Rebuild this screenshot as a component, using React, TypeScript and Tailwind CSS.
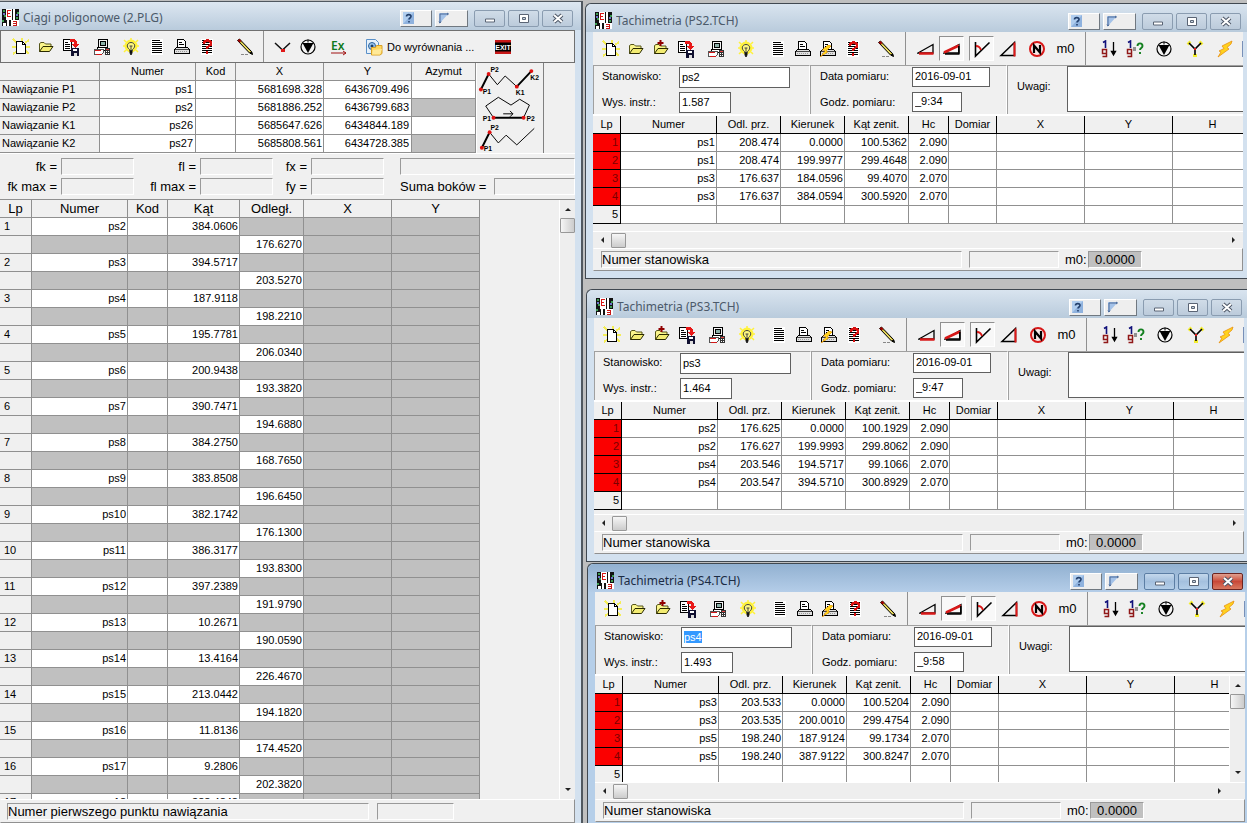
import React, { useEffect, useRef } from "react";

const svgBase = { width: 18, height: 18, viewBox: "0 0 18 18", "aria-hidden": true } as const;

function NewIcon() {
  return (
    <svg {...svgBase} shapeRendering="crispEdges">
      <path d="M1 1l4 4M10 0v4M17 2l-4 3M0 9h4M1 16l4-3M17 16l-3-3M14 9h4" stroke="#f5ee58" strokeWidth="2" fill="none" />
      <path d="M4.500 3.500h6l3 3v9h-9z" fill="#fff" stroke="#000" />
      <path d="M10.500 3.500v3h3" fill="none" stroke="#000" />
    </svg>
  );
}
function FolderIcon({ plus = false }: { plus?: boolean }) {
  return (
    <svg {...svgBase}>
      <path d="M2.500 13.500v-8l1.500-1h3l1.500 1.500h5.500v2.500" fill="#fbf68c" stroke="#55551a" />
      <path d="M2.500 13.500l3.500-5h10l-3.500 5z" fill="#f3ec72" stroke="#2a2a00" strokeLinejoin="round" />
      {plus && <path d="M8.500 0v6M5.500 3h6" stroke="#900000" strokeWidth="2" />}
    </svg>
  );
}
function SaveIcon() {
  return (
    <svg {...svgBase} shapeRendering="crispEdges">
      <path d="M1.500 1.500h6l2 2v9h-8z" fill="#fff" stroke="#000" />
      <path d="M3 4.500h3M3 6.500h5M3 8.500h5M3 10.500h5" stroke="#000" />
      <path d="M9 10h8v8H9z" fill="#101030" />
      <path d="M11 11h4v2h-4z" fill="#fff" />
      <path d="M12 15h3v3h-3z" fill="#ddd" />
      <path d="M8 1h4l3 2v3h2l-3.500 4L10 6h2V4H8z" fill="#e81818" />
    </svg>
  );
}
function ComputerIcon() {
  return (
    <svg {...svgBase} shapeRendering="crispEdges">
      <path d="M5.500 1.500h9v8h-9z" fill="#f4f4f4" stroke="#000" />
      <path d="M7.500 3.500h5v4h-5z" fill="#8cb0a8" stroke="#000" />
      <path d="M4.500 9.500h9v3h-9z" fill="#fff" stroke="#000" />
      <path d="M1.500 11.500h9v3l-2 2h-7z" fill="#fff" stroke="#555" />
      <path d="M2 12.500h6M3 16.500h6" stroke="#d01818" />
      <path d="M12 10h5v7h-5z" fill="#333" />
      <path d="M13 11.500h3" stroke="#e04040" />
      <path d="M13 13.500h1M15 13.500h1M13 15.500h1M15 15.500h1" stroke="#fff" />
    </svg>
  );
}
function BulbIcon() {
  return (
    <svg {...svgBase}>
      <circle cx="9" cy="8" r="6.500" fill="#fff23c" />
      <path d="M9 0v2M2 2l2 2M16 2l-2 2M1 8h2M15 8h2M2 14l2-2M16 14l-2-2" stroke="#fff23c" strokeWidth="1.500" />
      <path d="M7.500 11.500c-4-3-2-7 1.500-7s5.500 4 1.500 7v1h-3z" fill="#fff980" stroke="#444" />
      <path d="M7.500 8h3M9 8v4" stroke="#444" />
      <path d="M7.500 12.500h3v3h-3z" fill="#111" />
      <path d="M9 15v2" stroke="#000" strokeWidth="1.500" />
    </svg>
  );
}
function ListIcon() {
  return (
    <svg {...svgBase} shapeRendering="crispEdges">
      <path d="M3 1h12v16H3z" fill="#fff" />
      <path d="M4 2.500h8M4 4.500h10M4 6.500h10M4 8.500h10M4 10.500h10M4 12.500h10M4 14.500h10" stroke="#000" />
    </svg>
  );
}
function PrinterIcon({ flash = false }: { flash?: boolean }) {
  return (
    <svg {...svgBase} shapeRendering="crispEdges">
      <path d="M4.500 9V1.500h6l2 2V9" fill="#fff" stroke="#000" />
      <path d="M6 4.500h3M6 6.500h5" stroke="#000" />
      <path d="M3.500 9.500h11l2 2v4h-15v-4z" fill="#e0e0e0" stroke="#000" />
      <path d="M2 11.500h14" stroke="#444" />
      <path d="M3 13.500h12" stroke="#999" strokeDasharray="1 1" />
      {flash && <path d="M9 5L3 10l3 1-5 6 8-5-2-1 5-5z" fill="#ffd21e" stroke="#d88a10" strokeWidth="0.500" />}
    </svg>
  );
}
function ReportIcon() {
  return (
    <svg {...svgBase} shapeRendering="crispEdges">
      <path d="M3 1h12v16H3z" fill="#fff" />
      <path d="M4 2.500h10M4 4.500h10M4 6.500h10M4 8.500h10M4 10.500h10M4 12.500h10M4 14.500h10" stroke="#000" />
      <path d="M6 5.500c0-4 7-4 7 0 0 3-4 2-4 5M9 12.500v3" fill="none" stroke="#d81010" strokeWidth="2.500" />
    </svg>
  );
}
function PencilIcon() {
  return (
    <svg {...svgBase}>
      <path d="M5 16.500h8" stroke="#888" strokeDasharray="3 1" />
      <path d="M1.500 2.500l2-1.500 12 12.500 1 3-3-1.500z" fill="#c8b83c" stroke="#000" />
      <path d="M1.500 2.500l2-1.500 2 2-2 1.500z" fill="#a00000" />
      <path d="M5.500 5l8 8.500" stroke="#fff27a" />
      <path d="M13.500 14.500l3 2-.5-3z" fill="#000" />
    </svg>
  );
}
function CheckIcon() {
  return (
    <svg {...svgBase}>
      <path d="M1 5l7.500 7L16 5" fill="none" stroke="#111" strokeWidth="1.500" />
      <path d="M7 11h4v3H7z" fill="#e01818" />
    </svg>
  );
}
function CircleDownIcon() {
  return (
    <svg {...svgBase}>
      <circle cx="9" cy="9" r="7" fill="#f4f4f4" stroke="#000" strokeWidth="1.200" />
      <path d="M3.500 5h11L9 15z" fill="#000" />
      <path d="M9 1.500v3" stroke="#000" />
    </svg>
  );
}
function ExIcon() {
  return (
    <svg {...svgBase}>
      <text x="1" y="12" fontFamily="Noto Sans, sans-serif" fontSize="12" fontWeight="600" fill="#0f7a1c">Ex</text>
      <path d="M1 15h15M13 13l3 2-3 2" stroke="#a01010" fill="none" />
    </svg>
  );
}
function AdjustIcon() {
  return (
    <svg {...svgBase}>
      <path d="M1.500 1.500h9l3 3v11h-12z" fill="#e6f1fb" stroke="#5a90c8" />
      <circle cx="7" cy="8" r="3.500" fill="#9cc8f0" stroke="#2c6098" />
      <circle cx="7" cy="8" r="1.500" fill="#183c68" />
      <path d="M6.500 9.500h4l1-2h5.500v8l-2 1.500H6.500z" fill="#ffd75e" stroke="#d8a028" />
      <path d="M8 12l9-1-2 5.500H7z" fill="#ffe999" />
    </svg>
  );
}
function ExitIcon() {
  return (
    <svg {...svgBase}>
      <path d="M1 2h16v14H1z" fill="#000" />
      <path d="M1 2h16v2.500H1zM1 13.500h16V16H1z" fill="#c81818" />
      <text x="9" y="12" textAnchor="middle" fontFamily="Liberation Sans, sans-serif" fontSize="7" fontWeight="700" fill="#fff">EXIT</text>
    </svg>
  );
}
function SlopeIcon({ top = false }: { top?: boolean }) {
  return (
    <svg {...svgBase}>
      <path d="M1 13L16 4.500V13z" fill="none" stroke="#000" strokeWidth="1.300" />
      {top ? (
        <>
          <path d="M1 12.500L16 5.500" stroke="#d81818" strokeWidth="2.500" />
          <path d="M2 14h14.500M15.800 6v8" stroke="#000" strokeWidth="1.500" />
        </>
      ) : (
        <path d="M2 13.500h14.500" stroke="#d81818" strokeWidth="2.500" />
      )}
    </svg>
  );
}
function AngleIcon() {
  return (
    <svg {...svgBase}>
      <path d="M2.500 2v14L16.500 2.500" fill="none" stroke="#000" strokeWidth="1.600" />
      <path d="M3 6c3 0 4 1 5 4" fill="none" stroke="#d81818" strokeWidth="2" />
    </svg>
  );
}
function RightTriangleIcon() {
  return (
    <svg {...svgBase}>
      <path d="M2 15.500L15.500 2.500v13z" fill="none" stroke="#000" strokeWidth="1.500" />
      <path d="M15.500 2.500v14" stroke="#e01818" strokeWidth="2" />
    </svg>
  );
}
function NIcon() {
  return (
    <svg {...svgBase}>
      <circle cx="9" cy="9" r="7" fill="#f8e8e8" stroke="#d81818" strokeWidth="2" />
      <path d="M6 13V5.500l6 7V5" fill="none" stroke="#000" strokeWidth="2.200" />
    </svg>
  );
}
function OneG({ query = false }: { query?: boolean }) {
  return (
    <svg {...svgBase}>
      <path d="M2 2.500L4.500 1v7" fill="none" stroke="#10107a" strokeWidth="1.600" />
      <path d="M5.500 13.500h-4V9.500h4v7h-4" fill="none" stroke="#901818" strokeWidth="1.500" />
      {query ? (
        <>
          <path d="M7 8h3M7 10h3" stroke="#333" />
          <path d="M11.500 6c0-3.500 5-3.500 5 0 0 2-2.500 2-2.500 4M14 12v2" fill="none" stroke="#148020" strokeWidth="1.900" />
        </>
      ) : (
        <path d="M12.500 2v11M10.500 11.500l2 3.500 2-3.500z" fill="#000" stroke="#000" strokeWidth="1.300" />
      )}
    </svg>
  );
}
function YIcon() {
  return (
    <svg {...svgBase}>
      <path d="M2 2l2 2M16 2l-2 2M9 14v3" stroke="#f4ee30" strokeWidth="4" />
      <path d="M3 3l6 6 6-6M9 9v6" fill="none" stroke="#000" strokeWidth="1.600" />
      <path d="M8 8h2v2H8z" fill="#d81818" />
    </svg>
  );
}
function BoltIcon() {
  return (
    <svg {...svgBase}>
      <path d="M16 1L6 6l2 2.500-5 2.500 2 1-3 5 11-8-2-1.500L15 4z" fill="#ffd21e" stroke="#e89010" strokeWidth="0.800" />
    </svg>
  );
}

function AppIcon() {
  return (
    <svg width="17" height="17" viewBox="0 0 17 17" className="mt-0.5" aria-hidden shapeRendering="crispEdges">
      <path d="M0 0h17v17H0z" fill="#111" />
      <path d="M1 1h2v2H1zM2 6h2v2H2zM0 11h2v2H0zM14 8h2v2h-2zM15 3h2v2h-2z" fill="#3c9c50" />
      <path d="M1 4h2v2H1zM14 5h2v2h-2z" fill="#6c74c8" />
      <path d="M4 0h6v11H4zM11 0h2v11h-2zM1 14h3v3H1z" fill="#fff" />
      <path d="M5 1.500h4M5 4.500h3M5 7.500h4M5.500 1v7" stroke="#d81818" />
      <path d="M5 11h12v6H5z" fill="#fff" />
      <path d="M7.500 11v6" stroke="#111" strokeWidth="2" />
      <path d="M11 12.500h4M11 14.500h4M11 16.500h4M14.500 12v5" stroke="#c81818" />
    </svg>
  );
}

function ToolButton({ label, className = "", pressed = false, children }: { label: string; className?: string; pressed?: boolean; children: React.ReactNode }) {
  return (
    <button
      type="button"
      aria-label={label}
      aria-pressed={pressed || undefined}
      className={`flex h-[25px] w-[25px] shrink-0 items-center justify-center ${pressed ? "border border-[#909090] border-r-white border-b-white bg-[#f8f8f8]" : ""} ${className}`}
    >
      {children}
    </button>
  );
}

function TitleBar({ title, active = false, className = "" }: { title: string; active?: boolean; className?: string }) {
  const frame = active
    ? "border-[#5c7ea4] bg-linear-to-b from-[#c4d8ec] via-[#a4c0de] to-[#b4cee8]"
    : "border-[#8a9cb0] bg-linear-to-b from-[#d0dce8] to-[#bccbdb]";
  return (
    <header className={`flex h-7 shrink-0 items-center ${className}`}>
      <AppIcon />
      <h2 className={`ml-1 flex-1 truncate pt-1 font-['Noto_Sans',sans-serif] text-xs ${active ? "text-[#1c2c44]" : "text-[#4c5a6a]"}`}>{title}</h2>
      <div className="flex items-center gap-[3px] pt-1">
        <button type="button" aria-label="Pomoc" className="flex h-[17px] w-8 items-center border border-white border-r-[#707880] border-b-[#707880] bg-[#eeeeee] pl-px">
          <svg width="14" height="14" viewBox="0 0 14 14" aria-hidden>
            <path d="M1 1h11v12H1z" fill="#8fb2de" />
            <path d="M1 1h11L1 13z" fill="#b0cdee" />
            <path d="M4.500 5.500c0-2.500 4.500-2.500 4.500 0 0 1.500-2 1.500-2 3M7 10v1.500" fill="none" stroke="#24406c" strokeWidth="1.600" />
          </svg>
        </button>
        <button type="button" aria-label="Zakotwicz" className="flex h-[17px] w-[33px] items-center border border-white border-r-[#707880] border-b-[#707880] bg-[#eeeeee] pl-px">
          <svg width="14" height="14" viewBox="0 0 14 14" aria-hidden>
            <path d="M2 2h10L2 13z" fill="#a4c2e8" />
            <path d="M3 12V3h8M2 10.500l1 1.500 1-1.500M10 2l1.500 1L10 4" fill="none" stroke="#4c6a98" />
          </svg>
        </button>
        <button type="button" aria-label="Minimalizuj" className={`ml-[3px] flex h-[17px] w-[31px] items-center justify-center rounded-xs border ${frame}`}>
          <svg width="14" height="11" viewBox="0 0 14 11" aria-hidden><path d="M2.500 6h9v3h-9z" fill="#fff" stroke="#5a6474" /></svg>
        </button>
        <button type="button" aria-label="Maksymalizuj" className={`flex h-[17px] w-[31px] items-center justify-center rounded-xs border ${frame}`}>
          <svg width="14" height="11" viewBox="0 0 14 11" aria-hidden>
            <path d="M2.500 1.500h9v8h-9z" fill="#fff" stroke="#5a6474" />
            <path d="M5.500 4.500h3v2h-3z" fill="#c8d4e0" stroke="#5a6474" />
          </svg>
        </button>
        <button
          type="button"
          aria-label="Zamknij"
          className={`flex h-[17px] w-[31px] items-center justify-center rounded-xs border ${active ? "border-[#6c2420] bg-linear-to-b from-[#e0a090] via-[#c84838] to-[#d87860]" : frame}`}
        >
          <svg width="14" height="11" viewBox="0 0 14 11" aria-hidden>
            <path d="M3 2l8 7M11 2L3 9" stroke="#4c5666" strokeWidth="4" />
            <path d="M3 2l8 7M11 2L3 9" stroke="#fff" strokeWidth="2" />
          </svg>
        </button>
      </div>
    </header>
  );
}

function Arrow({ dir }: { dir: "up" | "down" | "left" | "right" }) {
  const d = { up: "M1 6l3-3 3 3z", down: "M1 2h6L4 5z", left: "M6 1v6L3 4z", right: "M2 1v6l3-3z" }[dir];
  return <svg width="8" height="8" viewBox="0 0 8 8" aria-hidden><path d={d} fill="#222" /></svg>;
}
const thumb = "border border-[#989898] rounded-[1px] from-[#f6f6f6] to-[#cccccc]";

function VScroll() {
  return (
    <div className="flex w-4 shrink-0 flex-col items-center border-l border-white bg-[#eeeeee]">
      <div className="flex h-[18px] shrink-0 items-center"><Arrow dir="up" /></div>
      <div className={`h-[15px] w-[15px] shrink-0 bg-linear-to-r ${thumb}`} />
      <div className="flex-1" />
      <div className="flex h-[18px] shrink-0 items-center"><Arrow dir="down" /></div>
    </div>
  );
}
function HScroll({ corner = false }: { corner?: boolean }) {
  return (
    <div className={`flex h-[17px] shrink-0 items-center border-t border-white bg-[#eeeeee] ${corner ? "pr-4" : ""}`}>
      <div className="flex w-[18px] justify-center"><Arrow dir="left" /></div>
      <div className={`h-[15px] w-[15px] bg-linear-to-b ${thumb}`} />
      <div className="flex-1" />
      <div className="flex w-[18px] justify-center"><Arrow dir="right" /></div>
    </div>
  );
}

const sunken = "border border-[#9a9a9a] border-r-white border-b-white";

const benchmarks = [
  ["Nawiązanie P1", "ps1", "5681698.328", "6436709.496"],
  ["Nawiązanie P2", "ps2", "5681886.252", "6436799.683"],
  ["Nawiązanie K1", "ps26", "5685647.626", "6434844.189"],
  ["Nawiązanie K2", "ps27", "5685808.561", "6434728.385"],
];
const traverse = [
  ["ps2", "384.0606", "176.6270"],
  ["ps3", "394.5717", "203.5270"],
  ["ps4", "187.9118", "198.2210"],
  ["ps5", "195.7781", "206.0340"],
  ["ps6", "200.9438", "193.3820"],
  ["ps7", "390.7471", "194.6880"],
  ["ps8", "384.2750", "168.7650"],
  ["ps9", "383.8508", "196.6450"],
  ["ps10", "382.1742", "176.1300"],
  ["ps11", "386.3177", "193.8300"],
  ["ps12", "397.2389", "191.9790"],
  ["ps13", "10.2671", "190.0590"],
  ["ps14", "13.4164", "226.4670"],
  ["ps15", "213.0442", "194.1820"],
  ["ps16", "11.8136", "174.4520"],
  ["ps17", "9.2806", "202.3820"],
  ["ps18", "388.4848", ""],
];

function SchemeDiagram() {
  return (
    <svg width="68" height="90" viewBox="478 63 68 90" className="shrink-0 border-r border-l border-[#808080] border-l-white" role="img" aria-label="Schematy ciągów">
      <g fill="none" stroke="#000">
        <path d="M490 73l9 11 8-9 12 11" />
        <path d="M495 118l-8-12 13-9 13 8 9-6 10 6-6 13M505 114h10M512 111l3 3-3 3" />
        <path d="M491 133l9 11 8-8 11 10 18-17" />
        <path d="M482 89l8-16M519 86l15-16M495 118h31M483 149l8-16" strokeWidth="2" />
      </g>
      <g fill="#e01010">
        <circle cx="482" cy="89" r="2" /><circle cx="490" cy="73" r="2" /><circle cx="519" cy="86" r="2" /><circle cx="534" cy="70" r="2" />
        <circle cx="495" cy="118" r="2" /><circle cx="526" cy="118" r="2" /><circle cx="483" cy="149" r="2" /><circle cx="491" cy="133" r="2" />
      </g>
      <g fontFamily="Liberation Sans, sans-serif" fontSize="7" fontWeight="700" fill="#000">
        <text x="492" y="71">P2</text><text x="484" y="94">P1</text><text x="518" y="95">K1</text><text x="533" y="79">K2</text>
        <text x="484" y="121">P1</text><text x="529" y="121">P2</text><text x="492" y="131">P2</text><text x="485" y="152">P1</text>
      </g>
    </svg>
  );
}

const cell = "h-[18px] border-r border-b border-[#909090] p-0 leading-[17px]";

function SumField({ label }: { label: string }) {
  return (
    <>
      <span className="text-right">{label}</span>
      <output aria-label={label} className={`h-[17px] ${sunken}`} />
    </>
  );
}

function TraverseWindow() {
  return (
    <section className="flex min-w-0 flex-[575_1_0%] flex-col border-t border-r-2 border-[#505860] bg-[#d3e1ef] pr-1.5">
      <div className="-mr-1.5 bg-linear-to-b from-[#dde7f1] to-[#b9cbdc] pr-2 pl-0.5">
        <TitleBar title="Ciągi poligonowe (2.PLG)" />
      </div>
      <div className="flex h-[33px] shrink-0 items-center border border-[#707070] bg-[#f0f0f0] pl-[7px]">
        <ToolButton label="Nowy"><NewIcon /></ToolButton>
        <ToolButton label="Otwórz"><FolderIcon /></ToolButton>
        <ToolButton label="Zapisz"><SaveIcon /></ToolButton>
        <ToolButton label="Import" className="ml-1.5"><ComputerIcon /></ToolButton>
        <ToolButton label="Podpowiedź" className="ml-1"><BulbIcon /></ToolButton>
        <ToolButton label="Lista" className="ml-px"><ListIcon /></ToolButton>
        <ToolButton label="Drukuj"><PrinterIcon /></ToolButton>
        <ToolButton label="Raport"><ReportIcon /></ToolButton>
        <ToolButton label="Edycja" className="ml-[13px]"><PencilIcon /></ToolButton>
        <span className="ml-1.5 h-full w-px bg-[#909090]" />
        <ToolButton label="Oblicz" className="ml-1.5"><CheckIcon /></ToolButton>
        <ToolButton label="Punkt"><CircleDownIcon /></ToolButton>
        <ToolButton label="Eksport" className="ml-1.5"><ExIcon /></ToolButton>
        <button type="button" className="ml-3.5 flex h-[25px] shrink-0 items-center gap-1 whitespace-nowrap"><AdjustIcon />Do wyrównania ...</button>
        <ToolButton label="Zakończ" className="ml-4"><ExitIcon /></ToolButton>
      </div>
      <div className="flex shrink-0 items-start bg-[#f0f0f0]">
        <table className="w-[476px] table-fixed border-separate border-spacing-0 bg-white">
          <colgroup>
            <col className="w-[100px]" /><col className="w-24" /><col className="w-10" /><col className="w-[88px]" /><col className="w-[88px]" /><col className="w-16" />
          </colgroup>
          <thead>
            <tr className="bg-[#f0f0f0]">
              {["", "Numer", "Kod", "X", "Y", "Azymut"].map((h, i) => <th key={i} scope="col" className={`${cell} font-normal`}>{h}</th>)}
            </tr>
          </thead>
          <tbody>
            {benchmarks.map(([name, num, x, y], i) => (
              <tr key={name}>
                <th scope="row" className={`${cell} bg-[#f0f0f0] pl-0.5 text-left font-normal`}>{name}</th>
                <td className={`${cell} pr-0.5 text-right`}>{num}</td>
                <td className={cell} />
                <td className={`${cell} pr-px text-right`}>{x}</td>
                <td className={`${cell} pr-0.5 text-right`}>{y}</td>
                <td className={`${cell} ${i % 2 ? "bg-[#c0c0c0]" : ""}`} />
              </tr>
            ))}
          </tbody>
        </table>
        <SchemeDiagram />
      </div>
      <div className="grid shrink-0 grid-cols-[57px_73px_58px_73px_30px_73px_1fr] items-center gap-x-1 gap-y-[3px] overflow-hidden border-t border-white bg-[#f0f0f0] pt-1 pb-1 text-[13px] leading-[17px] font-['Liberation_Sans',Arial,sans-serif] whitespace-nowrap">
        <SumField label="fk =" />
        <SumField label="fl =" />
        <SumField label="fx =" />
        <output aria-label="Wynik" className={`ml-3 h-[17px] ${sunken}`} />
        <SumField label="fk max =" />
        <SumField label="fl max =" />
        <SumField label="fy =" />
        <div className="ml-3 flex gap-2"><span>Suma boków =</span><output aria-label="Suma boków" className={`h-[17px] flex-1 ${sunken}`} /></div>
      </div>
      <div className="flex min-h-0 flex-1 border-t border-[#909090] bg-[#f0f0f0]">
        <div className="min-w-0 flex-1 overflow-hidden">
          <table className="w-[480px] table-fixed border-separate border-spacing-0 bg-white">
            <colgroup>
              <col className="w-8" /><col className="w-24" /><col className="w-10" /><col className="w-[72px]" /><col className="w-16" /><col className="w-[88px]" /><col className="w-[88px]" />
            </colgroup>
            <thead>
              <tr className="bg-[#f0f0f0] text-[13px]">
                {["Lp", "Numer", "Kod", "Kąt", "Odległ.", "X", "Y"].map((h) => <th key={h} scope="col" className={`${cell} font-normal`}>{h}</th>)}
              </tr>
            </thead>
            <tbody>
              {traverse.map(([num, angle, dist], i) => (
                <React.Fragment key={num}>
                  <tr>
                    <th scope="row" className={`${cell} bg-[#f0f0f0] pl-1 text-left font-normal`}>{i + 1}</th>
                    <td className={`${cell} pr-px text-right`}>{num}</td>
                    <td className={cell} />
                    <td className={`${cell} pr-px text-right`}>{angle}</td>
                    <td className={`${cell} bg-[#c0c0c0]`} /><td className={`${cell} bg-[#c0c0c0]`} /><td className={`${cell} bg-[#c0c0c0]`} />
                  </tr>
                  <tr>
                    <td className={`${cell} bg-[#f0f0f0]`} />
                    <td className={`${cell} bg-[#c0c0c0]`} /><td className={`${cell} bg-[#c0c0c0]`} /><td className={`${cell} bg-[#c0c0c0]`} />
                    <td className={`${cell} pr-px text-right`}>{dist}</td>
                    <td className={`${cell} bg-[#c0c0c0]`} /><td className={`${cell} bg-[#c0c0c0]`} />
                  </tr>
                </React.Fragment>
              ))}
            </tbody>
          </table>
        </div>
        <VScroll />
      </div>
      <footer className="flex h-6 shrink-0 items-center gap-2 border border-[#909090] border-t-white border-l-transparent bg-[#f0f0f0] pl-1.5 text-[13px] leading-[15px]">
        <span className={`h-[17px] w-[362px] ${sunken}`}>Numer pierwszego punktu nawiązania</span>
        <span className={`h-[17px] w-[77px] ${sunken}`} />
      </footer>
    </section>
  );
}

type Obs = [string, string, string, string, string];
interface StationProps {
  name: string;
  height: string;
  time: string;
  rows: Obs[];
  active?: boolean;
  className: string;
  gap: string;
}

const box = "border border-[#606060] bg-white px-0.5 outline-none selection:bg-[#3399ff] selection:text-white";

function StationWindow({ name, height, time, rows, active = false, className, gap }: StationProps) {
  const nameRef = useRef<HTMLInputElement>(null);
  useEffect(() => {
    if (active) {
      nameRef.current?.focus();
      nameRef.current?.select();
    }
  }, [active]);
  const head = "h-[18px] border-r border-b border-black p-0 leading-[17px] font-normal";
  return (
    <section className={`flex min-w-0 flex-col rounded-tl-md border-t border-l border-[#404850] pl-[7px] ${active ? "min-h-0 flex-1 bg-[#b6cfe9] pb-px" : "shrink-0 border-b bg-[#d3e1ef] pb-[7px]"} ${className}`}>
      <div className={`-mr-1 -ml-[7px] rounded-tl-md pr-1.5 pl-[9px] ${active ? "bg-linear-to-b from-[#92b1d1] to-[#b4cde8]" : "bg-linear-to-b from-[#d9e4ef] to-[#b9cbdc]"}`}>
        <TitleBar title={`Tachimetria (${name.toUpperCase()}.TCH)`} active={active} className="pt-0.5" />
      </div>
      <div className="flex h-[33px] shrink-0 items-center overflow-hidden bg-[#f0f0f0] pl-[5px]">
        <ToolButton label="Nowy"><NewIcon /></ToolButton>
        <ToolButton label="Otwórz"><FolderIcon /></ToolButton>
        <ToolButton label="Dołącz"><FolderIcon plus /></ToolButton>
        <ToolButton label="Zapisz"><SaveIcon /></ToolButton>
        <ToolButton label="Import" className="ml-[5px]"><ComputerIcon /></ToolButton>
        <ToolButton label="Podpowiedź" className="ml-[5px]"><BulbIcon /></ToolButton>
        <ToolButton label="Lista" className="ml-[7px]"><ListIcon /></ToolButton>
        <ToolButton label="Drukuj"><PrinterIcon /></ToolButton>
        <ToolButton label="Szybki wydruk"><PrinterIcon flash /></ToolButton>
        <ToolButton label="Raport"><ReportIcon /></ToolButton>
        <ToolButton label="Edycja" className="ml-2"><PencilIcon /></ToolButton>
        <span className="ml-[7px] h-full w-px shrink-0 bg-[#909090]" />
        <ToolButton label="Odległość pozioma" className="ml-[7px]"><SlopeIcon /></ToolButton>
        <ToolButton label="Odległość skośna" className="ml-px" pressed><SlopeIcon top /></ToolButton>
        <ToolButton label="Kąt" className="ml-[5px]" pressed><AngleIcon /></ToolButton>
        <ToolButton label="Przewyższenie" className="ml-px"><RightTriangleIcon /></ToolButton>
        <ToolButton label="Nitki" className="ml-1"><NIcon /></ToolButton>
        <button type="button" className="ml-1 flex h-[25px] w-[25px] shrink-0 items-center justify-center text-[13px]">m0</button>
        <span className="ml-[7px] h-full w-px shrink-0 bg-[#909090]" />
        <ToolButton label="Redukcja" className="ml-[11px]"><OneG /></ToolButton>
        <ToolButton label="Kontrola"><OneG query /></ToolButton>
        <ToolButton label="Punkt" className="ml-1"><CircleDownIcon /></ToolButton>
        <ToolButton label="Wcięcie" className="ml-1.5"><YIcon /></ToolButton>
        <ToolButton label="Oblicz" className="ml-[5px]"><BoltIcon /></ToolButton>
        <span className="ml-[5px] h-4 w-4 shrink-0 bg-[#7890b8]" />
      </div>
      <div className="flex h-[51px] shrink-0 border-b-2 border-white bg-[#f0f0f0]">
        <div className="grid w-[217px] shrink-0 grid-cols-[77px_1fr] content-start gap-y-1 border-t border-r border-l border-[#a0a0a0] border-r-white pt-px pl-2">
          <label htmlFor={`${name}-st`} className="leading-[19px]">Stanowisko:</label>
          <input id={`${name}-st`} ref={nameRef} defaultValue={name} className={`h-[21px] w-[111px] pb-0.5 ${box}`} />
          <label htmlFor={`${name}-wi`} className="leading-5">Wys. instr.:</label>
          <input id={`${name}-wi`} defaultValue={height} className={`h-[21px] w-[52px] pb-0.5 ${box}`} />
        </div>
        <div className="grid w-[197px] shrink-0 grid-cols-[92px_1fr] content-start gap-y-[5px] border-t border-r border-l border-[#a0a0a0] border-r-white pt-px pl-[9px]">
          <label htmlFor={`${name}-dp`} className="leading-[19px]">Data pomiaru:</label>
          <input id={`${name}-dp`} defaultValue="2016-09-01" className={`h-5 w-[78px] pb-0.5 ${box}`} />
          <label htmlFor={`${name}-gp`} className="leading-5">Godz. pomiaru:</label>
          <input id={`${name}-gp`} defaultValue={time} className={`h-5 w-[50px] pb-0.5 ${box}`} />
        </div>
        <div className="flex min-w-0 flex-1 border-t border-l border-[#a0a0a0] pl-[9px]">
          <label htmlFor={`${name}-uw`} className="w-[50px] shrink-0 pt-3">Uwagi:</label>
          <textarea id={`${name}-uw`} className="h-[46px] min-w-0 flex-1 resize-none border border-r-0 border-[#606060] bg-white outline-none" />
        </div>
      </div>
      <div className={`flex bg-[#f0f0f0] ${active ? "min-h-0 flex-1" : "shrink-0"} ${gap}`}>
        <div className="min-w-0 flex-1 overflow-hidden">
          <table className="w-full min-w-[660px] table-fixed border-separate border-spacing-0 bg-white">
            <colgroup>
              <col className="w-7" /><col className="w-24" /><col className="w-16" /><col className="w-16" /><col className="w-16" /><col className="w-10" /><col className="w-12" /><col className="w-[88px]" /><col className="w-[88px]" /><col />
            </colgroup>
            <thead>
              <tr className="bg-[#f0f0f0]">
                {["Lp", "Numer", "Odl. prz.", "Kierunek", "Kąt zenit.", "Hc", "Domiar", "X", "Y", "H"].map((h) => <th key={h} scope="col" className={head}>{h}</th>)}
              </tr>
            </thead>
            <tbody>
              {rows.map((r, i) => (
                <tr key={i}>
                  <th scope="row" className={`${head} bg-[#fb0000] pr-0.5 text-right text-[#7a0000]`}>{i + 1}</th>
                  {r.map((v, j) => <td key={j} className={`${cell} pr-px text-right`}>{v}</td>)}
                  <td className={cell} /><td className={cell} /><td className={cell} /><td className={cell} />
                </tr>
              ))}
              <tr>
                <th scope="row" className={`${head} bg-[#f0f0f0] pr-0.5 text-right`}>5</th>
                {[0, 1, 2, 3, 4, 5, 6, 7, 8].map((k) => <td key={k} className={cell} />)}
              </tr>
            </tbody>
          </table>
        </div>
        {active && <VScroll />}
      </div>
      <HScroll corner={active} />
      <footer className="flex h-[23px] shrink-0 items-center border border-[#909090] border-t-white border-l-transparent bg-[#f0f0f0] pl-[7px] text-[13px] leading-[15px]">
        <span className={`h-[17px] w-[361px] ${sunken}`}>Numer stanowiska</span>
        <span className={`ml-[7px] h-[17px] w-[90px] ${sunken}`} />
        <span className="ml-1.5 w-[23px]">m0:</span>
        <output aria-label="m0" className={`h-[17px] w-[54px] bg-[#c0c0c0] text-center ${sunken}`}>0.0000</output>
      </footer>
    </section>
  );
}

export default function App() {
  return (
    <main className="flex h-screen overflow-hidden bg-[#bfbfbf] pt-px font-['Liberation_Sans',Arial,sans-serif] text-[11px] leading-4 text-black">
      <TraverseWindow />
      <div className="flex min-w-0 flex-[662_1_0%] flex-col pt-0.5 pl-0.5">
        <StationWindow
          name="ps2" height="1.587" time="_9:34" className="pr-1" gap="pb-[7px]"
          rows={[
            ["ps1", "208.474", "0.0000", "100.5362", "2.090"],
            ["ps1", "208.474", "199.9977", "299.4648", "2.090"],
            ["ps3", "176.637", "184.0596", "99.4070", "2.070"],
            ["ps3", "176.637", "384.0594", "300.5920", "2.070"],
          ]}
        />
        <StationWindow
          name="ps3" height="1.464" time="_9:47" className="mt-2.5 ml-px pr-[3px]" gap="pb-1"
          rows={[
            ["ps2", "176.625", "0.0000", "100.1929", "2.090"],
            ["ps2", "176.627", "199.9993", "299.8062", "2.090"],
            ["ps4", "203.546", "194.5717", "99.1066", "2.070"],
            ["ps4", "203.547", "394.5710", "300.8929", "2.070"],
          ]}
        />
        <StationWindow
          name="ps4" height="1.493" time="_9:58" className="mt-px ml-0.5 pr-0.5" gap="" active
          rows={[
            ["ps3", "203.533", "0.0000", "100.5204", "2.090"],
            ["ps3", "203.535", "200.0010", "299.4754", "2.090"],
            ["ps5", "198.240", "187.9124", "99.1734", "2.070"],
            ["ps5", "198.240", "387.9122", "300.8247", "2.070"],
          ]}
        />
      </div>
    </main>
  );
}
